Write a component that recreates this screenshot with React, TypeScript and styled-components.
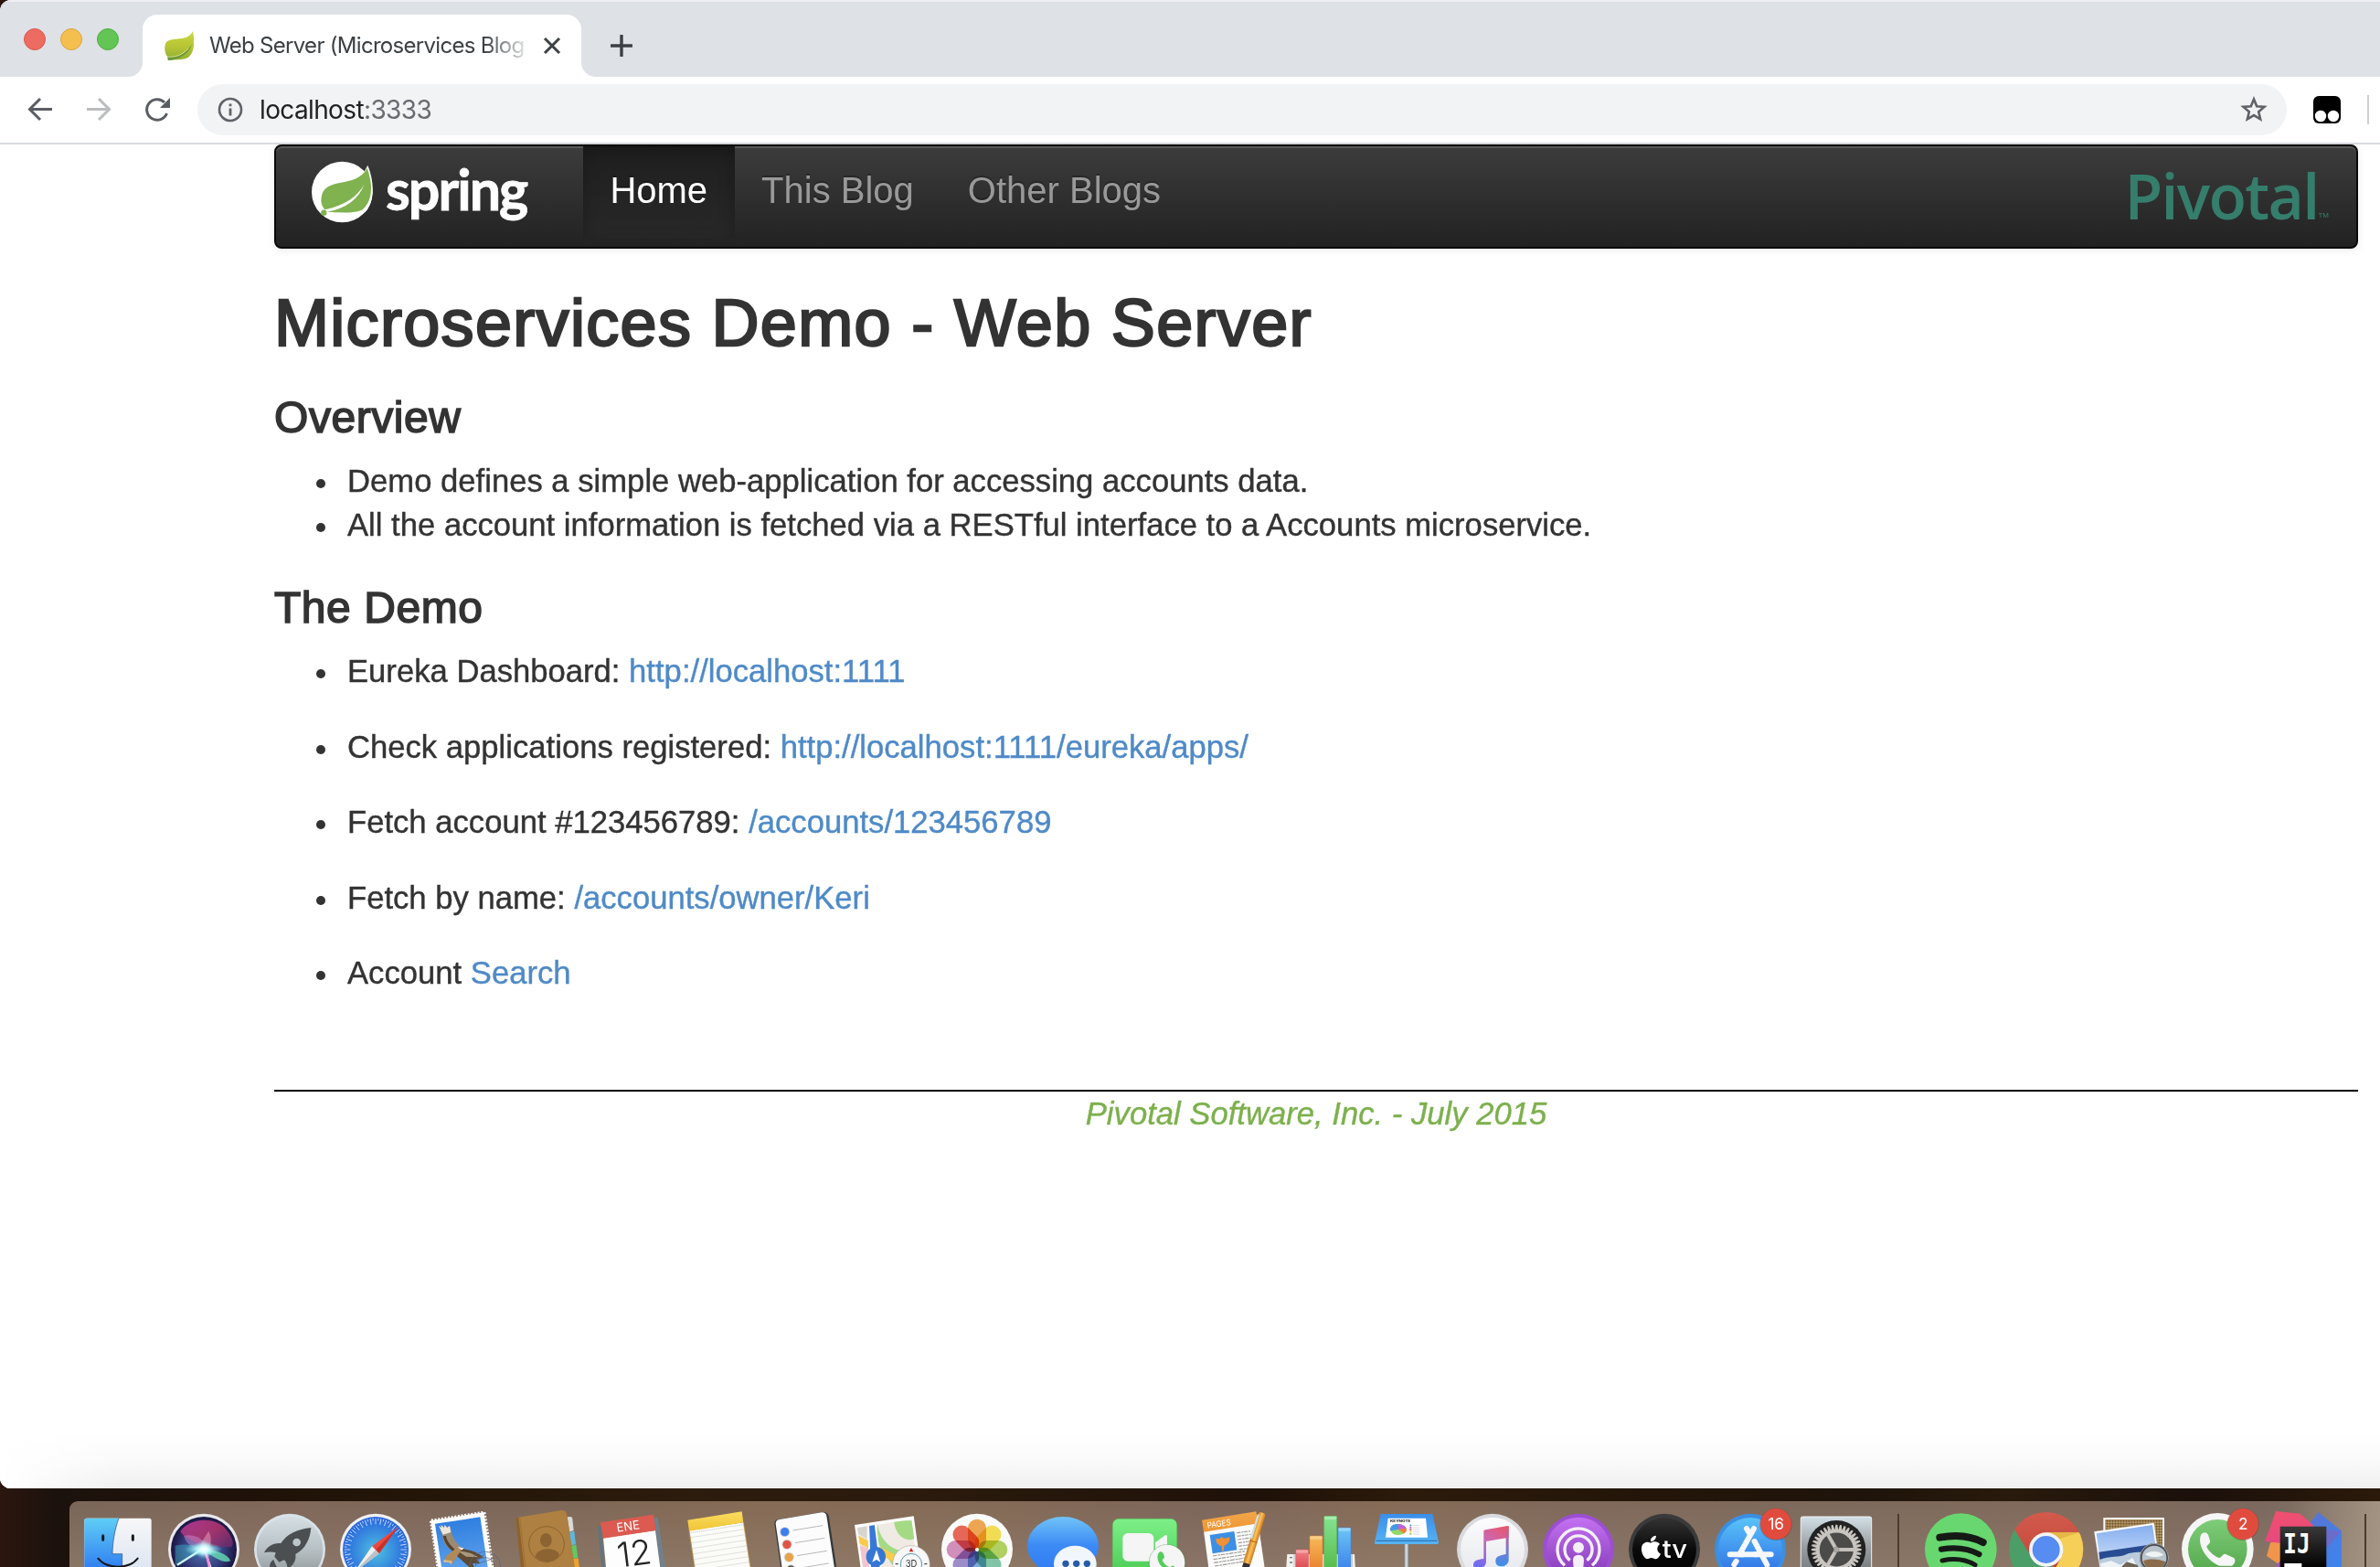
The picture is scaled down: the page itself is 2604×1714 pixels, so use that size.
import React from "react";
import styled, { createGlobalStyle } from "styled-components";

const Global = createGlobalStyle`
  html, body { margin: 0; padding: 0; }
  body { width: 2604px; height: 1714px; overflow: hidden; background: #1f1209; }
  * { box-sizing: border-box; }
  svg { display: block; }
`;

const Desktop = styled.div`
  width: 2604px;
  height: 1714px;
  overflow: hidden;
  display: flex;
  flex-direction: column;
  background: linear-gradient(90deg, #2b160e 0, #1c120d 60px, #1f1208 280px, #261809 560px, #2c1c0d 760px, #2b1b0e 1000px, #1e1108 1380px, #2b1b0b 1540px, #231509 1800px, #1f140b 2040px, #281a0c 2200px, #1b100b 2400px, #2b1a0a 2604px);
`;

const Browser = styled.div`
  height: 1628px;
  flex: none;
  display: flex;
  flex-direction: column;
  background: #fff;
  border-radius: 12px 0 0 12px;
  overflow: hidden;
`;

const TabStrip = styled.div`
  height: 84px;
  flex: none;
  display: flex;
  align-items: flex-end;
  background: #dee1e6;
  box-shadow: inset 0 2px 0 #eceef1;
`;

const Lights = styled.div`
  display: flex;
  gap: 16px;
  align-self: flex-start;
  padding: 31px 0 0 26px;
  width: 156px;
`;

const Light = styled.span<{ $fill: string; $edge: string }>`
  width: 24px;
  height: 24px;
  border-radius: 50%;
  background: ${(p) => p.$fill};
  border: 1px solid ${(p) => p.$edge};
`;

const Tab = styled.div`
  position: relative;
  width: 480px;
  height: 68px;
  display: flex;
  align-items: center;
  padding: 0 22px 0 24px;
  background: #fff;
  border-radius: 16px 16px 0 0;
  &::before, &::after {
    content: "";
    position: absolute;
    bottom: 0;
    width: 16px;
    height: 16px;
  }
  &::before { left: -16px; background: radial-gradient(circle at 0 0, transparent 15.5px, #fff 16.5px); }
  &::after { right: -16px; background: radial-gradient(circle at 100% 0, transparent 15.5px, #fff 16.5px); }
`;

const TabTitle = styled.span`
  flex: 1;
  margin-left: 17px;
  white-space: nowrap;
  font: 400 24px/32px Inter, sans-serif;
  letter-spacing: -0.7px;
  color: #3c4043;
  mask-image: linear-gradient(90deg, #000 300px, transparent 354px);
`;

const CloseIcon = styled.svg`
  flex: none;
`;

const NewTabIcon = styled.svg`
  margin: 0 0 22px 32px;
`;

const Toolbar = styled.div`
  height: 74px;
  flex: none;
  display: flex;
  align-items: center;
  padding-left: 28px;
  border-bottom: 2px solid #d9dbe0;
`;

const NavIcons = styled.div`
  display: flex;
  gap: 32px;
  width: 188px;
`;

const Omnibox = styled.div`
  width: 2286px;
  height: 56px;
  border-radius: 28px;
  display: flex;
  align-items: center;
  background: #f1f3f4;
  padding: 0 20px 0 22px;
`;

const Address = styled.span`
  flex: 1;
  margin-left: 18px;
  font: 400 28px/40px Inter, sans-serif;
  letter-spacing: -0.63px;
  color: #202124;
`;

const Port = styled.span`
  color: #696c70;
`;

const ExtensionIcon = styled.svg`
  margin-left: 29px;
`;

const ToolbarDivider = styled.span`
  width: 2px;
  height: 32px;
  margin-left: 29px;
  background: #cfd0d2;
`;

const Page = styled.div`
  flex: 1;
  display: flex;
  flex-direction: column;
  padding: 0 24px 0 300px;
  font-family: "Liberation Sans", Arial, sans-serif;
  color: #333;
  background:
    linear-gradient(90deg, #fff 0, rgba(255, 255, 255, 0) 130px) bottom / 100% 60px no-repeat,
    linear-gradient(180deg, #fff 0, #fafafa 50%, #f0f0f0 100%) bottom / 100% 60px no-repeat,
    #fff;
`;

const Navbar = styled.nav`
  height: 114px;
  flex: none;
  display: flex;
  border: 2px solid #090909;
  border-radius: 8px;
  background: linear-gradient(180deg, #3c3c3c 0%, #222 100%);
  box-shadow: inset 0 2px 0 rgba(255, 255, 255, 0.15), 0 2px 10px rgba(0, 0, 0, 0.075);
`;

const Brand = styled.div`
  width: 336px;
  display: flex;
  padding: 16px 0 0 38px;
`;

const BrandName = styled.span`
  margin: -4px 0 0 13px;
  font: 700 61px/70px Lato, sans-serif;
  letter-spacing: -2px;
  color: #fff;
  -webkit-text-stroke: 0.8px #fff;
`;

const NavItem = styled.a<{ $active?: boolean }>`
  height: 100px;
  padding: 22px 29.6px 0 29.4px;
  font-size: 40px;
  line-height: 52px;
  white-space: nowrap;
  text-shadow: 0 -2px 0 rgba(0, 0, 0, 0.25);
  color: ${(p) => (p.$active ? "#fff" : "#999")};
  background: ${(p) => (p.$active ? "linear-gradient(180deg, #1f1f1f 0%, #282828 100%)" : "none")};
  box-shadow: ${(p) => (p.$active ? "inset 0 6px 18px rgba(0, 0, 0, 0.25)" : "none")};
`;

const Sponsor = styled.span`
  margin: 14px 30px 0 auto;
  display: flex;
  align-items: flex-start;
  font: 600 68px/80px "Open Sans", sans-serif;
  letter-spacing: -1.7px;
  color: #357e6b;
`;

const Trademark = styled.span`
  font: 400 8px/10px "Liberation Sans", Arial, sans-serif;
  letter-spacing: 0;
  margin: 57px 0 0;
`;

const Title = styled.h1`
  margin: 41px 0 0;
  font-size: 72px;
  line-height: 80px;
  font-weight: 400;
  letter-spacing: 1.32px;
  -webkit-text-stroke: 2.4px #333;
`;

const Heading = styled.h2<{ $top: number }>`
  margin: ${(p) => p.$top}px 0 19px;
  font-size: 48px;
  line-height: 52px;
  font-weight: 400;
  letter-spacing: 0.55px;
  -webkit-text-stroke: 1.6px #333;
`;

const List = styled.ul<{ $gap: number }>`
  margin: 0;
  padding: 0 0 0 46px;
  list-style: none;
  display: flex;
  flex-direction: column;
  gap: ${(p) => p.$gap}px;
`;

const Item = styled.li`
  display: flex;
  font-size: 34.65px;
  line-height: 48px;
  white-space: pre;
  -webkit-text-stroke: 0.4px currentColor;
  &::before {
    content: "";
    width: 10px;
    height: 10px;
    margin: 22px 24px 0 0;
    border-radius: 50%;
    background: #333;
  }
`;

const Link = styled.a`
  color: #4f8ac7;
`;

const Footer = styled.footer`
  margin-top: 104px;
  border-top: 2px solid #000;
  text-align: center;
  font-size: 34.65px;
  line-height: 48px;
  font-style: italic;
  color: #7db04d;
  -webkit-text-stroke: 0.4px currentColor;
`;

const Dock = styled.div`
  flex: none;
  margin: 14px 0 0 76px;
  height: 72px;
  display: flex;
  padding-left: 6px;
  border-radius: 9px 0 0 0;
  overflow: hidden;
  background:
    linear-gradient(90deg, rgba(185, 170, 150, 0) 2430px, rgba(185, 170, 150, 0.55) 2528px),
    linear-gradient(180deg, rgba(150, 132, 116, 0) 0%, rgba(150, 132, 116, 0.5) 100%),
    linear-gradient(90deg, #7a6657 0, #80675a 240px, #7c6658 480px, #866b55 760px, #846a56 1000px, #7c655a 1240px, #866b56 1440px, #7f685a 1640px, #7d6a5c 1940px, #80695b 2200px, #7a685e 2400px, #86766a 2528px);
`;

const DockDivider = styled.span<{ $width: number; $left: number }>`
  flex: none;
  width: ${(p) => p.$width}px;
  padding: 14px 0 0 ${(p) => p.$left}px;
  &::before {
    content: "";
    display: block;
    width: 2px;
    height: 58px;
    background: #4c3a2e;
  }
`;

const IconCell = styled.svg`
  flex: none;
  width: 94px;
  height: 72px;
`;

/* Icons are drawn at three units per pixel; x is where the cell starts on its sheet. */
const DockIcon = ({ x, children }: { x: number; children: React.ReactNode }) => (
  <IconCell viewBox={`${x} 126 282 216`}>{children}</IconCell>
);

const Grad = ({ id, stops, x2 = 0, y2 = 1 }: { id: string; stops: string[]; x2?: number; y2?: number }) => (
  <linearGradient id={id} x1="0" y1="0" x2={x2} y2={y2}>
    {stops.map((c, i) => (
      <stop key={i} offset={i / (stops.length - 1)} stopColor={c} />
    ))}
  </linearGradient>
);

const around = (n: number) => Array.from({ length: n }, (_, i) => (i * 360) / n);

const Leaf = () => (
  <svg width="32" height="32" viewBox="0 0 32 32">
    <defs><Grad id="leaf" stops={["#c8d845", "#b9c634", "#8fae35"]} /></defs>
    <path d="M31 0C33 10 33 22 27 28C22 32 12 31 4 32C3 31 4 30 4 29C0 25-1 17 2 12C8 6 26 12 31 0Z" fill="url(#leaf)" />
    <path d="M3 27C13 30 25 24 30 14C28 23 18 31 4 32Z" fill="#6a963a" />
    <path d="M3 28C12 29 20 26 26 19" stroke="#dfe88a" strokeWidth="1" fill="none" />
  </svg>
);

const SpringMark = () => (
  <svg width="69" height="70" viewBox="152 80 207 210">
    <circle cx="255" cy="182" r="100" fill="#fff" />
    <path d="M339 94C362 150 362 215 330 249L300 240L320 130Z" fill="#fff" />
    <path d="M337 104C358 160 355 215 320 241C290 253 245 250 205 247C265 238 308 208 328 156C305 199 262 227 198 240C188 228 184 215 187 200C196 128 300 174 337 104Z" fill="#80b24f" />
    <circle cx="195" cy="250" r="9.5" fill="#80b24f" />
  </svg>
);

const Finder = () => (
  <DockIcon x={246}>
    <defs><Grad id="fi1" stops={["#5fcdf6", "#2f7df0"]} /><Grad id="fi2" stops={["#f7f7f8", "#dde6f2"]} /></defs>
    <rect x="277" y="182" width="220" height="170" rx="7" fill="url(#fi2)" />
    <path d="M284 182H390C376 220 370 260 369 299H401V352H277V189Q277 182 284 182Z" fill="url(#fi1)" />
    <path d="M390 182C376 220 370 260 369 299H401V342" fill="none" stroke="#2a4c7c" strokeWidth="2" />
    <path d="M338 239V253M436 239V253" stroke="#15181c" strokeWidth="9" strokeLinecap="round" />
    <path d="M322 314C350 350 425 350 452 314" fill="none" stroke="#15181c" strokeWidth="6" strokeLinecap="round" />
  </DockIcon>
);

const Siri = () => (
  <DockIcon x={528}>
    <defs>
      <radialGradient id="si" cx=".5" cy=".5" r=".5"><stop offset="0" stopColor="#4f79b6" /><stop offset=".6" stopColor="#35407f" /><stop offset="1" stopColor="#1b1440" /></radialGradient>
      <radialGradient id="si2"><stop offset="0" stopColor="#fff" /><stop offset=".35" stopColor="#dff" stopOpacity=".8" /><stop offset="1" stopColor="#8ff" stopOpacity="0" /></radialGradient>
      <Grad id="si3" stops={["#c13a9c", "#b33369", "#5d2a70"]} x2={1} />
    </defs>
    <circle cx="669" cy="284" r="117" fill="#e9e8ec" />
    <circle cx="669" cy="285" r="108" fill="url(#si)" />
    <path d="M592 225C625 178 705 178 740 215C765 245 770 270 758 276C725 280 690 262 669 284C640 250 605 250 592 225Z" fill="url(#si3)" opacity=".85" />
    <path d="M603 240C630 232 672 245 684 285C655 300 610 270 603 240Z" fill="#c58ad0" opacity=".5" />
    <path d="M685 224C700 255 692 290 664 300C645 280 668 250 685 224Z" fill="#f2a0c0" opacity=".5" />
    <path d="M575 272C620 262 660 276 680 288C640 310 590 320 575 342Z" fill="#43c7d8" opacity=".4" />
    <path d="M670 284C705 286 745 295 757 322C735 332 698 310 670 284Z" fill="#69e8b8" opacity=".75" />
    <path d="M582 335L669 280L692 346" fill="none" stroke="#cbf4fa" strokeWidth="7" />
    <path d="M675 285L688 346" stroke="#ff8ad0" strokeWidth="8" />
    <ellipse cx="668" cy="284" rx="62" ry="22" fill="url(#si2)" />
    <circle cx="670" cy="284" r="32" fill="url(#si2)" />
  </DockIcon>
);

const Launchpad = () => (
  <DockIcon x={810}>
    <defs><Grad id="la" stops={["#d5dee3", "#b7c0c4", "#878e91"]} /></defs>
    <circle cx="951" cy="284" r="117" fill="#d7e2e8" />
    <circle cx="951" cy="285" r="109" fill="url(#la)" />
    <path d="M1021 213C975 217 940 236 922 264C895 262 876 276 867 295C882 291 895 292 905 295L901 308L916 326L933 319C940 326 944 336 943 348C966 335 972 320 970 300C1003 282 1018 250 1021 213Z" fill="#4b4f52" />
    <circle cx="974" cy="261" r="13" fill="#bcc6ca" />
    <path d="M898 318C886 324 884 336 886 350H915C905 340 902 328 898 318Z" fill="#4b4f52" />
  </DockIcon>
);

const Safari = () => (
  <DockIcon x={1092}>
    <defs><radialGradient id="sa" cy=".52"><stop offset="0" stopColor="#4fc0e0" /><stop offset="1" stopColor="#2866dd" /></radialGradient></defs>
    <circle cx="1233" cy="284" r="117" fill="#f0f1f3" />
    <circle cx="1233" cy="285" r="108" fill="url(#sa)" />
    {around(72).map((a, i) => (
      <path key={a} d={i % 2 ? "M1233 182V190" : "M1233 182V202"} stroke="#dceefb" strokeWidth="2.4" transform={`rotate(${a} 1233 285)`} />
    ))}
    <path d="M1307 210L1221 274L1244 298Z" fill="#ea4b3f" />
    <path d="M1307 210L1233 286L1244 298Z" fill="#c9302c" />
    <path d="M1221 274L1244 298L1160 362Z" fill="#f0f0f0" />
    <path d="M1233 286L1244 298L1160 362Z" fill="#bdc0c4" />
  </DockIcon>
);

const Mail = () => (
  <DockIcon x={-6}>
    <defs><Grad id="ma" stops={["#2f7fe0", "#69a9ee"]} /></defs>
    <g transform="rotate(-8.6 30 190)">
      <rect x="34" y="190" width="176" height="220" fill="#fff" />
      <path d="M36 190H212V400" fill="none" stroke="#fff" strokeWidth="9" strokeDasharray="6 5" />
      <path d="M34 192V400" fill="none" stroke="#fff" strokeWidth="9" strokeDasharray="6 5" />
      <rect x="46" y="203" width="150" height="200" fill="url(#ma)" />
    </g>
    <path d="M60 206L70 214L67 203L78 213L80 203L87 213L96 207L101 226C106 246 116 262 132 276C128 284 122 290 112 294C88 280 72 262 73 240Z" fill="#9a8a74" />
    <path d="M60 206L70 214L67 203L78 213L80 203L87 213L96 207L100 228L74 236Z" fill="#ece6da" />
    <path d="M74 240C78 262 92 282 112 294L118 288C98 272 86 256 84 240Z" fill="#54432f" />
    <path d="M112 290L132 282C160 284 188 292 206 310L186 318L196 330L172 330L176 342H160L120 306Z" fill="#5d4a34" />
    <path d="M124 290C150 290 172 298 190 310L150 308Z" fill="#a8977c" />
    <path d="M108 288C122 270 138 276 132 290C120 305 112 320 104 333L92 325L76 327L84 306Z" fill="#b08a58" />
    <path d="M76 318L104 322L102 333L92 326L76 327Z" fill="#d9b98c" />
    <path d="M122 276L142 280L136 287Z" fill="#f7f3ea" />
    <g fill="none" stroke="#5f6478" strokeWidth="3" opacity=".75"><circle cx="212" cy="343" r="51" /><circle cx="212" cy="343" r="32" /></g>
    <path d="M176 322L212 300M180 334L240 314" stroke="#5f6478" strokeWidth="3" opacity=".7" />
  </DockIcon>
);

const Contacts = () => (
  <DockIcon x={276}>
    <path d="M482 178L494 177Q498 178 499 183L503 223L489 226Z" fill="#d9d9d6" />
    <path d="M489 227L505 224L510 268L495 271Z" fill="#5eb7dd" />
    <path d="M495 272L511 269L517 311L501 315Z" fill="#5ecb62" />
    <path d="M501 316L518 313L523 352H505Z" fill="#f0a02e" />
    <path d="M312 181L462 156Q478 154 481 170L508 352H330Z" fill="#ae8041" />
    <path d="M312 181L322 179L342 352H330Z" fill="#8c6230" />
    <path d="M326 179L346 352" stroke="#94692f" strokeWidth="2" />
    <circle cx="414" cy="267" r="58" fill="none" stroke="#8b6431" strokeWidth="3" />
    <ellipse cx="412" cy="254" rx="19" ry="23" fill="#8b6431" />
    <path d="M376 307C388 276 446 276 456 302C440 330 395 332 376 307Z" fill="#8b6431" />
  </DockIcon>
);

const Calendar = () => (
  <DockIcon x={558}>
    <path d="M582 210L592 207L606 352H596Z" fill="#5e7482" />
    <path d="M765 180L779 180L806 352H786Z" fill="#71808a" />
    <path d="M600 247L771 222L788 352H610Z" fill="#fdfdfd" />
    <path d="M591 196L765 170L773 222L600 248Z" fill="#dc5a50" />
    <text x="682" y="222" fontSize="40" fontFamily="Inter, sans-serif" fill="#fff" textAnchor="middle" transform="rotate(-8 682 210)" textLength="76" lengthAdjust="spacingAndGlyphs">ENE</text>
    <text x="702" y="337" fontSize="112" fontWeight="300" fontFamily="Inter, sans-serif" fill="#222" textAnchor="middle" transform="rotate(-7 700 300)" textLength="114" lengthAdjust="spacingAndGlyphs">12</text>
  </DockIcon>
);

const Notes = () => (
  <DockIcon x={840}>
    <defs><Grad id="no" stops={["#fbdc60", "#f0c436"]} /></defs>
    <path d="M883 222L1060 196L1084 352H902Z" fill="#fbfbf8" />
    <path d="M877 188L1055 160L1060 196L882 224Z" fill="url(#no)" />
    <path d="M886 230L1061 203" stroke="#999" strokeWidth="1.5" strokeDasharray="4 3" />
    {[0, 1, 2, 3, 4, 5, 6].map((i) => (
      <path key={i} d={`M${888 + i * 2.5} ${245 + i * 18}L${1063 + i * 2.7} ${218 + i * 18}`} stroke="#c9c9c9" strokeWidth="1.6" />
    ))}
    <path d="M882 224L902 352M1060 196L1084 352" stroke="#d1a43c" strokeWidth="2" />
  </DockIcon>
);

const Reminders = () => (
  <DockIcon x={1122}>
    <path d="M1162 200Q1162 188 1174 186L1318 162Q1336 160 1340 174L1367 352H1184Z" fill="#33393d" />
    <path d="M1166 200Q1166 188 1178 186L1316 163Q1330 161 1333 174L1360 352H1188Z" fill="#fcfcfc" />
    {[["#3f7fec", 1196, 227], ["#dc5546", 1203, 268], ["#eaa24a", 1210, 310], ["#555", 1216, 351]].map(([c, cx, cy]) => (
      <g key={c}>
        <circle cx={cx} cy={cy} r="17" fill="#ddd" /><circle cx={cx} cy={cy} r="14" fill={c as string} />
        <path d={`M${Number(cx) + 26} ${Number(cy) - 5}L${Number(cx) + 124} ${Number(cy) - 21}`} stroke="#969696" strokeWidth="2" />
      </g>
    ))}
  </DockIcon>
);

const Maps = () => (
  <DockIcon x={24}>
    <clipPath id="mp"><path d="M54 213L232 186L254 352H74Z" /></clipPath>
    <path d="M45 204L239 175L264 352H66Z" fill="#fdfdfd" />
    <g clipPath="url(#mp)">
      <rect x="40" y="170" width="230" height="180" fill="#efebe4" />
      <path d="M120 190H240V250C205 262 178 230 174 192L120 200C130 260 175 300 235 285V352H180L120 260Z" fill="#a5da84" />
      <path d="M50 205H85V250L55 232Z" fill="#d8d5ce" />
      <path d="M60 270L100 285L110 352H60Z" fill="#f3c4cd" />
      <path d="M55 238L210 318V345L55 262Z" fill="#f9ca4c" />
      <path d="M90 200H113L132 352H96Z" fill="#3878d8" stroke="#fff" strokeWidth="6" />
    </g>
    <circle cx="115" cy="308" r="32" fill="#3577d4" />
    <path d="M117 286L130 326L117 318L103 326Z" fill="#fff" />
    <circle cx="231" cy="333" r="61" fill="#f7f7f7" stroke="#aaa098" strokeWidth="1.5" />
    <circle cx="231" cy="333" r="35" fill="none" stroke="#5d93ae" strokeWidth="3" />
    <path d="M231 279L238 292H224Z" fill="#d8261c" />
    <path d="M179 332H188M274 332H283" stroke="#222" strokeWidth="3" />
    <text x="231" y="342" fontSize="32" fontFamily="Inter, sans-serif" fill="#333" textAnchor="middle" textLength="38" lengthAdjust="spacingAndGlyphs">3D</text>
  </DockIcon>
);

const petals = ["#f19a37", "#f5dc3a", "#a8cd4a", "#6fbf9a", "#69a4d8", "#8f7cc4", "#cf7fb5", "#e8503f"];
const Petal = styled.rect`
  mix-blend-mode: multiply;
`;
const Photos = () => (
  <DockIcon x={306}>
    <circle cx="447" cy="284" r="117" fill="#fafafa" />
    {petals.map((c, i) => (
      <Petal key={c} x="417" y="185" width="60" height="98" rx="30" fill={c} opacity=".86" transform={`rotate(${i * 45} 447 285)`} />
    ))}
    <circle cx="447" cy="285" r="6" fill="#fff" />
  </DockIcon>
);

const Messages = () => (
  <DockIcon x={588}>
    <defs><Grad id="me" stops={["#70c3f8", "#3b8af5", "#2f7cf2"]} /></defs>
    <ellipse cx="729" cy="272" rx="117" ry="95" fill="url(#me)" />
    <ellipse cx="769" cy="331" rx="70" ry="59" fill="#f1f6fc" />
    {[738, 773, 808].map((cx) => <circle key={cx} cx={cx} cy="331" r="11" fill="#275ca4" />)}
  </DockIcon>
);

const FaceTime = () => (
  <DockIcon x={870}>
    <defs><Grad id="fa" stops={["#7df088", "#4ccc55"]} /></defs>
    <rect x="892" y="184" width="211" height="180" rx="20" fill="url(#fa)" stroke="#58c35e" strokeWidth="2" />
    <rect x="925" y="231" width="102" height="92" rx="17" fill="#f4f5f4" />
    <path d="M1032 262L1064 238Q1071 234 1071 242V315L1032 292Z" fill="#f4f5f4" />
    <circle cx="1071" cy="328" r="61" fill="#4b8a50" opacity=".4" />
    <circle cx="1071" cy="327" r="58" fill="#f4f5f4" />
    <path d="M1042 297C1048 289 1055 290 1058 298L1062 308C1063 313 1056 315 1055 319C1059 330 1068 339 1080 343L1090 337L1104 348H1064C1045 338 1034 315 1042 297Z" fill="#55cc5d" />
  </DockIcon>
);

const Pages = () => (
  <DockIcon x={1152}>
    <defs><Grad id="pa" stops={["#f3a64a", "#ee9634"]} /><Grad id="pe" x2={1} y2={0} stops={["#c8751c", "#ffc25b", "#c8751c"]} /></defs>
    <path d="M1191 224L1370 198L1392 352H1208Z" fill="#fbfbfa" />
    <path d="M1185 188L1363 160L1370 199L1191 227Z" fill="url(#pa)" />
    <text x="1204" y="215" fontSize="27" fontFamily="Inter, sans-serif" fill="#fff" transform="rotate(-8 1204 215)" textLength="78" lengthAdjust="spacingAndGlyphs">PAGES</text>
    <path d="M1211 237L1291 225L1300 286L1220 298Z" fill="#3b8fe4" />
    <path d="M1231 248L1242 250L1250 243L1258 248L1276 244C1278 258 1270 268 1258 273L1257 289L1251 290L1250 274C1238 270 1230 262 1231 248Z" fill="#f29035" />
    {[0, 1, 2, 3, 4, 5].map((i) => (
      <path key={i} d={`M${1300 + i * 1.5} ${230 + i * 11}L${1344 + i} ${224 + i * 11}`} stroke="#9a9a9a" strokeWidth="3.4" strokeDasharray="12 3 7 2" />
    ))}
    {[0, 1, 2, 3].map((i) => (
      <path key={i} d={`M${1221 + i * 2} ${306 + i * 11}L${1328 + i} ${290 + i * 11}`} stroke="#9a9a9a" strokeWidth="3.4" strokeDasharray="14 3 8 2" />
    ))}
    <g transform="rotate(17 1380 170)">
      <rect x="1369" y="163" width="25" height="178" rx="9" fill="url(#pe)" />
      <path d="M1371 175V252" stroke="#cfe0e8" strokeWidth="7" strokeLinecap="round" />
      <path d="M1369 262H1394" stroke="#a8641b" strokeWidth="3" />
      <rect x="1370" y="337" width="23" height="50" fill="#333" />
    </g>
  </DockIcon>
);

const bars: [number, number, string, string][] = [
  [353, 285, "#f28186", "#d9484e"], [399, 240, "#f7bb58", "#e8812f"], [446, 175, "#86e392", "#55bb4a"], [492, 213, "#6dc5f6", "#3a82ea"],
];
const Numbers = () => (
  <DockIcon x={294}>
    <path d="M325 300H546L549 352H321Z" fill="#f0f0ee" />
    <path d="M348 300V342M538 300V342" stroke="#a9a9a9" strokeWidth="2" />
    <path d="M333 311H342M333 327H342" stroke="#777" strokeWidth="4" />
    {bars.map(([x, y, top, bottom], i) => (
      <g key={x}>
        <defs><Grad id={`nu${i}`} stops={[top, bottom]} /></defs>
        <rect x={x} y={y} width="42" height={352 - y} rx="3" fill={`url(#nu${i})`} stroke={bottom} strokeWidth="1.5" />
        <rect x={x + 1} y={y + 1} width="40" height="10" rx="3" fill="#fff" opacity=".3" />
      </g>
    ))}
  </DockIcon>
);

const Keynote = () => (
  <DockIcon x={576}>
    <defs><Grad id="ke" stops={["#3a8eea", "#57b4f2"]} /><Grad id="kp" x2={1} y2={0} stops={["#8aa0ad", "#dfe7ec", "#8195a1"]} /></defs>
    <rect x="710" y="262" width="13" height="90" fill="url(#kp)" />
    <path d="M632 168H802L822 262Q822 267 817 267H617Q611 267 612 262Z" fill="url(#ke)" />
    <path d="M617 256H817" stroke="#225b99" strokeWidth="2.5" />
    <path d="M656 182H780L786 245H648Z" fill="#fff" />
    <text x="663" y="194" fontSize="12" fontWeight="800" fontFamily="Inter, sans-serif" fill="#333" textLength="67" lengthAdjust="spacingAndGlyphs">KEYNOTE</text>
    <ellipse cx="690" cy="219" rx="27" ry="18" fill="#8fd968" />
    <path d="M690 219L663 223C662 205 675 200 690 201Z" fill="#4598e8" />
    <path d="M690 219V201C703 201 714 208 716 216Z" fill="#c65fd8" />
    <path d="M690 219L716 215C719 222 715 229 708 232Z" fill="#f0803c" />
    {["#3aa0ee", "#c65fd8", "#e84848", "#f2c53b", "#7fd060"].map((c, i) => (
      <g key={c}><rect x="727" y={203 + i * 7} width="6" height="5" fill={c} /><path d={`M738 ${206 + i * 7}H760`} stroke="#c8c8c8" strokeWidth="2" /></g>
    ))}
  </DockIcon>
);

const Music = () => (
  <DockIcon x={858}>
    <defs><linearGradient id="mu" gradientUnits="userSpaceOnUse" x1="1040" y1="210" x2="960" y2="345"><stop offset="0" stopColor="#e8566b" /><stop offset=".45" stopColor="#c869b8" /><stop offset="1" stopColor="#6d6bf5" /></linearGradient>
      <Grad id="mu2" stops={["#e8566b", "#8872c8", "#3a92ee"]} /><Grad id="mu3" stops={["#fcfcfd", "#e4e6ea"]} /></defs>
    <circle cx="999" cy="284" r="117" fill="#d9dade" />
    <circle cx="999" cy="284" r="105" fill="url(#mu3)" />
    <path d="M970 225Q970 221 976 220L1048 207Q1052 207 1052 211V245L978 258V325C978 350 936 356 936 336C936 320 950 318 970 315Z" fill="url(#mu)" />
    <path d="M1043 215L1052 208V318C1052 345 1009 348 1009 323C1009 306 1022 305 1043 300Z" fill="url(#mu2)" />
  </DockIcon>
);

const Podcasts = () => (
  <DockIcon x={1140}>
    <defs><Grad id="po" stops={["#c471f2", "#8138b4"]} /></defs>
    <circle cx="1281" cy="284" r="117" fill="#9c4fcf" />
    <circle cx="1281" cy="284" r="105" fill="url(#po)" />
    <path d="M1236 337A69 69 0 1 1 1326 337" fill="none" stroke="#f4f0f6" strokeWidth="10" />
    <path d="M1253 320A45 45 0 1 1 1309 320" fill="none" stroke="#f4f0f6" strokeWidth="10" />
    <circle cx="1281" cy="278" r="18" fill="#f4f0f6" />
    <path d="M1263 320Q1263 302 1281 302Q1299 302 1299 320L1296 352H1266Z" fill="#f4f0f6" />
  </DockIcon>
);

const AppleTv = () => (
  <DockIcon x={222}>
    <defs><Grad id="tv" stops={["#333", "#0a0a0a", "#000"]} /></defs>
    <circle cx="363" cy="284" r="117" fill="#3a3a3a" />
    <circle cx="363" cy="285" r="105" fill="url(#tv)" />
    <path d="M318 263C325 257 342 256 348 267C336 276 338 293 351 299C345 312 337 319 329 314C322 311 318 311 312 314C300 321 287 298 288 281C289 262 306 257 318 263Z" fill="#fff" />
    <path d="M318 258C317 247 325 240 336 239C336 250 329 258 318 258Z" fill="#fff" />
    <text x="356" y="313" fontSize="82" fontWeight="500" fontFamily="Inter, sans-serif" fill="#fff" textLength="82" lengthAdjust="spacingAndGlyphs">tv</text>
  </DockIcon>
);

const Badge = ({ cx, label }: { cx: number; label: string }) => (
  <g>
    <circle cx={cx} cy="202" r="53" fill="#5b2a20" opacity=".35" />
    <circle cx={cx} cy="201" r="51" fill="#e14b3d" />
    <text x={cx} y="220" fontSize="52" fontFamily="Inter, sans-serif" fill="#fff" textAnchor="middle" letterSpacing="-1">{label}</text>
  </g>
);

const AppStore = () => (
  <DockIcon x={504}>
    <defs><Grad id="as" stops={["#59c3f9", "#2a66e4"]} /></defs>
    <circle cx="645" cy="284" r="117" fill="#3b8fe0" />
    <circle cx="645" cy="285" r="105" fill="url(#as)" />
    <g stroke="#f5f7fa" strokeLinecap="round" fill="none">
      <path d="M657 216L612 296M578 301H622M660 301H713" strokeWidth="18" />
      <path d="M633 216L640 228" strokeWidth="18" />
      <path d="M599 323L592 334M659 258L700 335" strokeWidth="18" />
    </g>
    <path d="M606 292H668V310H606Z" fill="#f5f7fa" />
    <Badge cx={729} label="16" />
  </DockIcon>
);

const Preferences = () => (
  <DockIcon x={786}>
    <defs><Grad id="pr" stops={["#d3dfe7", "#9da4a8", "#74797c"]} /></defs>
    <rect x="811" y="177" width="232" height="180" rx="6" fill="url(#pr)" stroke="#eef4f7" strokeWidth="3" />
    <circle cx="928" cy="285" r="96" fill="#222" />
    {around(36).map((a) => (
      <path key={a} d="M925 203H931L934 222H922Z" fill="#c8c5c0" transform={`rotate(${a} 928 285)`} />
    ))}
    <circle cx="928" cy="285" r="61" fill="#4b4b4a" stroke="#c8c5c0" strokeWidth="11" />
    {[0, 120, 240].map((a) => (
      <path key={a} d="M928 279H990V291H928Z" fill="#c4c1bc" transform={`rotate(${a} 928 285)`} />
    ))}
    <circle cx="928" cy="285" r="9" fill="#aaa8a4" stroke="#666" />
  </DockIcon>
);

const Spotify = () => (
  <DockIcon x={54}>
    <circle cx="196" cy="284" r="118" fill="#68d770" />
    <g fill="none" stroke="#161a16" strokeLinecap="round">
      <path d="M127 245C175 236 228 239 269 261" strokeWidth="24" />
      <path d="M132 284C175 276 218 280 256 300" strokeWidth="19" />
      <path d="M135 321C172 313 210 316 243 335" strokeWidth="15" />
    </g>
  </DockIcon>
);

const Chrome = () => (
  <DockIcon x={336}>
    <defs><Grad id="ch" stops={["#d25b4c", "#c04337"]} /></defs>
    <clipPath id="cc"><circle cx="476" cy="284" r="122" /></clipPath>
    <g clipPath="url(#cc)">
      <rect x="350" y="160" width="252" height="200" fill="url(#ch)" />
      <path d="M476 228H602V360H500L530 300Z" fill="#f6cf58" />
      <path d="M373 220L428 310L500 340L480 370H340V200Z" fill="#4c9e68" />
      <path d="M476 228H588L520 250Z" fill="#d9a73c" opacity=".6" />
    </g>
    <circle cx="476" cy="285" r="56" fill="#f4f4f4" />
    <circle cx="476" cy="285" r="45" fill="#578cf0" />
  </DockIcon>
);

const Preview = () => (
  <DockIcon x={618}>
    <defs>
      <Grad id="pv" stops={["#84aef0", "#bcd3f6"]} />
      <pattern id="sand" width="9" height="9" patternUnits="userSpaceOnUse"><rect width="9" height="9" fill="#a08050" /><rect x="0" y="1" width="3" height="3" fill="#4e3c22" /><rect x="5" y="5" width="3" height="3" fill="#d6bb86" /><rect x="5" y="0" width="3" height="2" fill="#6a5230" /></pattern>
    </defs>
    <rect x="667" y="183" width="194" height="150" fill="url(#sand)" stroke="#fbfbfb" strokeWidth="6" />
    <path d="M634 226L830 197L852 352H654Z" fill="#fff" stroke="#cfcac4" strokeWidth="1" />
    <path d="M641 232L825 204L836 275L650 300Z" fill="url(#pv)" />
    <path d="M649 293L834 266L845 352H656Z" fill="#294b91" />
    <path d="M652 318C680 305 720 312 740 300C760 290 790 295 838 290L845 352H656Z" fill="#b9cbdc" />
    <path d="M655 330L690 322L720 335L760 312L780 352H657Z" fill="#eef3f6" />
    <path d="M715 350L740 325L775 335L785 352Z" fill="#6d6455" />
    <circle cx="831" cy="312" r="44" fill="#b8c3cb" stroke="#4a4d50" strokeWidth="8" />
    <circle cx="831" cy="312" r="47" fill="none" stroke="#c9ccce" strokeWidth="2" />
    <path d="M795 322C815 312 850 316 868 325C862 342 850 350 831 352C812 350 800 342 795 322Z" fill="#8a6b4b" />
    <path d="M800 300C820 285 850 290 862 302C845 312 815 312 800 300Z" fill="#eef3f6" />
  </DockIcon>
);

const WhatsApp = () => (
  <DockIcon x={900}>
    <defs><Grad id="wa" stops={["#7fcc78", "#50a549"]} /></defs>
    <circle cx="1039" cy="283" r="118" fill="#f6f6f6" />
    <circle cx="1039" cy="283" r="97" fill="url(#wa)" />
    <path d="M984 236C990 226 1003 226 1008 236L1014 256C1016 266 1004 270 1003 276C1010 292 1028 306 1044 312C1052 310 1056 298 1064 299L1092 312C1100 318 1096 332 1086 338H1045C1010 325 970 275 984 236Z" fill="#f6f6f6" />
    <Badge cx={1122} label="2" />
  </DockIcon>
);

const IntelliJ = () => (
  <DockIcon x={1182}>
    <defs><Grad id="ij1" stops={["#f0506e", "#e8487e"]} /><Grad id="ij2" x2={1} stops={["#5d72cf", "#3a86f0"]} /><Grad id="ij3" stops={["#393939", "#000"]} /></defs>
    <path d="M1212 262L1250 258V340L1200 306Z" fill="#f0954a" />
    <path d="M1236 330L1260 310V352H1230Z" fill="#a355c0" />
    <path d="M1370 162L1446 224V352H1380V270L1335 205Z" fill="url(#ij2)" />
    <path d="M1230 159L1310 167L1352 204L1350 240L1250 264L1195 258Z" fill="url(#ij1)" />
    <path d="M1395 220L1445 225L1396 280Z" fill="#6b6bcb" />
    <rect x="1244" y="209" width="152" height="140" fill="url(#ij3)" />
    <text x="1255" y="296" fontSize="92" fontWeight="700" fontFamily="'DejaVu Sans Mono', monospace" fill="#fff" textLength="88" lengthAdjust="spacingAndGlyphs">IJ</text>
    <rect x="1258" y="330" width="57" height="14" fill="#fff" />
  </DockIcon>
);

export default function App() {
  return (
    <Desktop>
      <Global />
      <Browser>
        <TabStrip>
          <Lights>
            <Light $fill="#ed6b60" $edge="#d9574c" />
            <Light $fill="#f5bf4f" $edge="#dda63a" />
            <Light $fill="#62c554" $edge="#4fae42" />
          </Lights>
          <Tab>
            <Leaf />
            <TabTitle>Web Server (Microservices Blog</TabTitle>
            <CloseIcon width="20" height="20" viewBox="0 0 20 20">
              <path d="M2 2L18 18M18 2L2 18" stroke="#3c4043" strokeWidth="3" />
            </CloseIcon>
          </Tab>
          <NewTabIcon width="24" height="24" viewBox="0 0 24 24">
            <path d="M12 1V23M1 12H23" stroke="#3c4043" strokeWidth="3.4" strokeLinecap="round" />
          </NewTabIcon>
        </TabStrip>
        <Toolbar>
          <NavIcons>
            <svg width="32" height="32" viewBox="0 0 32 32" fill="none" stroke="#5a5d62" strokeWidth="3">
              <path d="M29 15.5H5M16 4L4.500 15.500L16 27" />
            </svg>
            <svg width="32" height="32" viewBox="0 0 32 32" fill="none" stroke="#babcbe" strokeWidth="3">
              <path d="M3 15.500H27M16 4L27.500 15.500L16 27" />
            </svg>
            <svg width="32" height="32" viewBox="0 0 32 32">
              <path d="M26.500 20A11.300 11.300 0 1 1 24 8" fill="none" stroke="#5a5d62" strokeWidth="3" />
              <path d="M30 3V14H19Z" fill="#5a5d62" />
            </svg>
          </NavIcons>
          <Omnibox>
            <svg width="28" height="28" viewBox="0 0 28 28">
              <circle cx="14" cy="14" r="12" fill="none" stroke="#5f6368" strokeWidth="2.600" />
              <path d="M14 12.500V20.500M14 7.500V10.300" stroke="#5f6368" strokeWidth="2.800" />
            </svg>
            <Address>localhost<Port>:3333</Port></Address>
            <svg width="32" height="32" viewBox="0 0 32 32">
              <path d="M16 4.500L19.200 12.200L27.500 12.900L21.200 18.300L23.100 26.400L16 22.100L8.900 26.400L10.800 18.300L4.500 12.900L12.800 12.200Z" fill="none" stroke="#5f6368" strokeWidth="2.600" />
            </svg>
          </Omnibox>
          <ExtensionIcon width="30" height="30" viewBox="0 0 30 30">
            <rect width="30" height="30" rx="6" fill="#000" />
            <circle cx="8" cy="22" r="6.200" fill="#fff" />
            <circle cx="22" cy="22" r="6.200" fill="#fff" />
          </ExtensionIcon>
          <ToolbarDivider />
        </Toolbar>
        <Page>
          <Navbar>
            <Brand>
              <SpringMark />
              <BrandName>spring</BrandName>
            </Brand>
            <NavItem $active>Home</NavItem>
            <NavItem>This Blog</NavItem>
            <NavItem>Other Blogs</NavItem>
            <Sponsor>Pivotal<Trademark>TM</Trademark></Sponsor>
          </Navbar>
          <Title>Microservices Demo - Web Server</Title>
          <Heading $top={38}>Overview</Heading>
          <List $gap={0}>
            <Item>Demo defines a simple web-application for accessing accounts data.</Item>
            <Item>All the account information is fetched via a RESTful interface to a Accounts microservice.</Item>
          </List>
          <Heading $top={41}>The Demo</Heading>
          <List $gap={34.5}>
            <Item>Eureka Dashboard: <Link>http://localhost:1111</Link></Item>
            <Item>Check applications registered: <Link>http://localhost:1111/eureka/apps/</Link></Item>
            <Item>Fetch account #123456789: <Link>/accounts/123456789</Link></Item>
            <Item>Fetch by name: <Link>/accounts/owner/Keri</Link></Item>
            <Item>Account <Link>Search</Link></Item>
          </List>
          <Footer>Pivotal Software, Inc. - July 2015</Footer>
        </Page>
      </Browser>
      <Dock>
        <Finder /><Siri /><Launchpad /><Safari /><Mail /><Contacts /><Calendar /><Notes /><Reminders />
        <Maps /><Photos /><Messages /><FaceTime /><Pages /><Numbers /><Keynote /><Music /><Podcasts />
        <AppleTv /><AppStore /><Preferences />
        <DockDivider $width={42} $left={20} />
        <Spotify /><Chrome /><Preview /><WhatsApp /><IntelliJ />
        <DockDivider $width={36} $left={19} />
      </Dock>
    </Desktop>
  );
}
